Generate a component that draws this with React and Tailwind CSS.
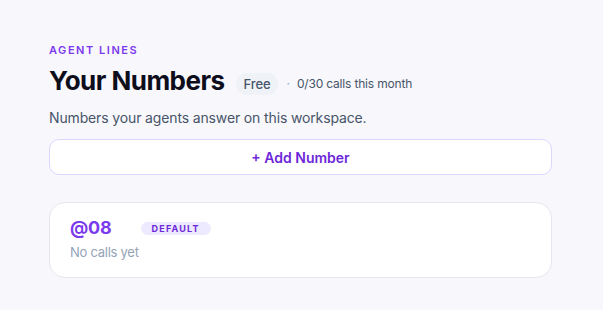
export default function App() {
  return (
    <div
      className="min-h-[310px] w-full bg-[#f8f7fc] pl-[49px] pr-[51px] pt-[42px] pb-8"
      style={{ fontFamily: "Inter, 'Noto Sans', sans-serif" }}
    >
      <div className="text-[11px] font-semibold uppercase tracking-[0.14em] text-[#7c3aed] leading-4">
        Agent Lines
      </div>

      <div className="mt-[7px] flex items-center">
        <h1 className="text-[26px] font-bold leading-8 tracking-[-0.02em] text-[#0d0d1c]">
          Your Numbers
        </h1>
        <div className="mt-[5px] flex items-center">
          <span className="ml-[11px] rounded-full bg-[#eff2f6] px-[8px] text-[13px] font-medium leading-[22px] tracking-[-0.01em] text-[#475569]">
            Free
          </span>
          <span className="ml-[8px] text-[12px] leading-4 text-[#94a3b8]">·</span>
          <span className="ml-[7px] text-[12px] leading-4 tracking-[-0.015em] text-[#475569]">
            0/30 calls this month
          </span>
        </div>
      </div>

      <p className="mt-[11px] text-[14px] leading-5 tracking-[-0.01em] text-[#475569]">
        Numbers your agents answer on this workspace.
      </p>

      <button className="mt-[11px] flex h-[36px] w-full items-center justify-center rounded-[10px] border border-[#ddd6fe] bg-white text-[14px] font-semibold text-[#6d28d9]">
        + Add Number
      </button>

      <div className="mt-[27px] rounded-[16px] border border-[#e6e6ee] bg-white px-5 pt-[13px] pb-[15px]">
        <div className="flex items-center">
          <span className="text-[18px] font-bold leading-6 tracking-[-0.01em] text-[#7c3aed]">@08</span>
          <span className="ml-[29px] rounded-full bg-[#ede9fe] px-[11px] text-[9px] font-bold uppercase leading-[13px] tracking-[0.13em] text-[#6d28d9]">
            Default
          </span>
        </div>
        <div className="mt-[2px] text-[13px] leading-5 tracking-[-0.02em] text-[#94a3b8]">
          No calls yet
        </div>
      </div>
    </div>
  );
}
